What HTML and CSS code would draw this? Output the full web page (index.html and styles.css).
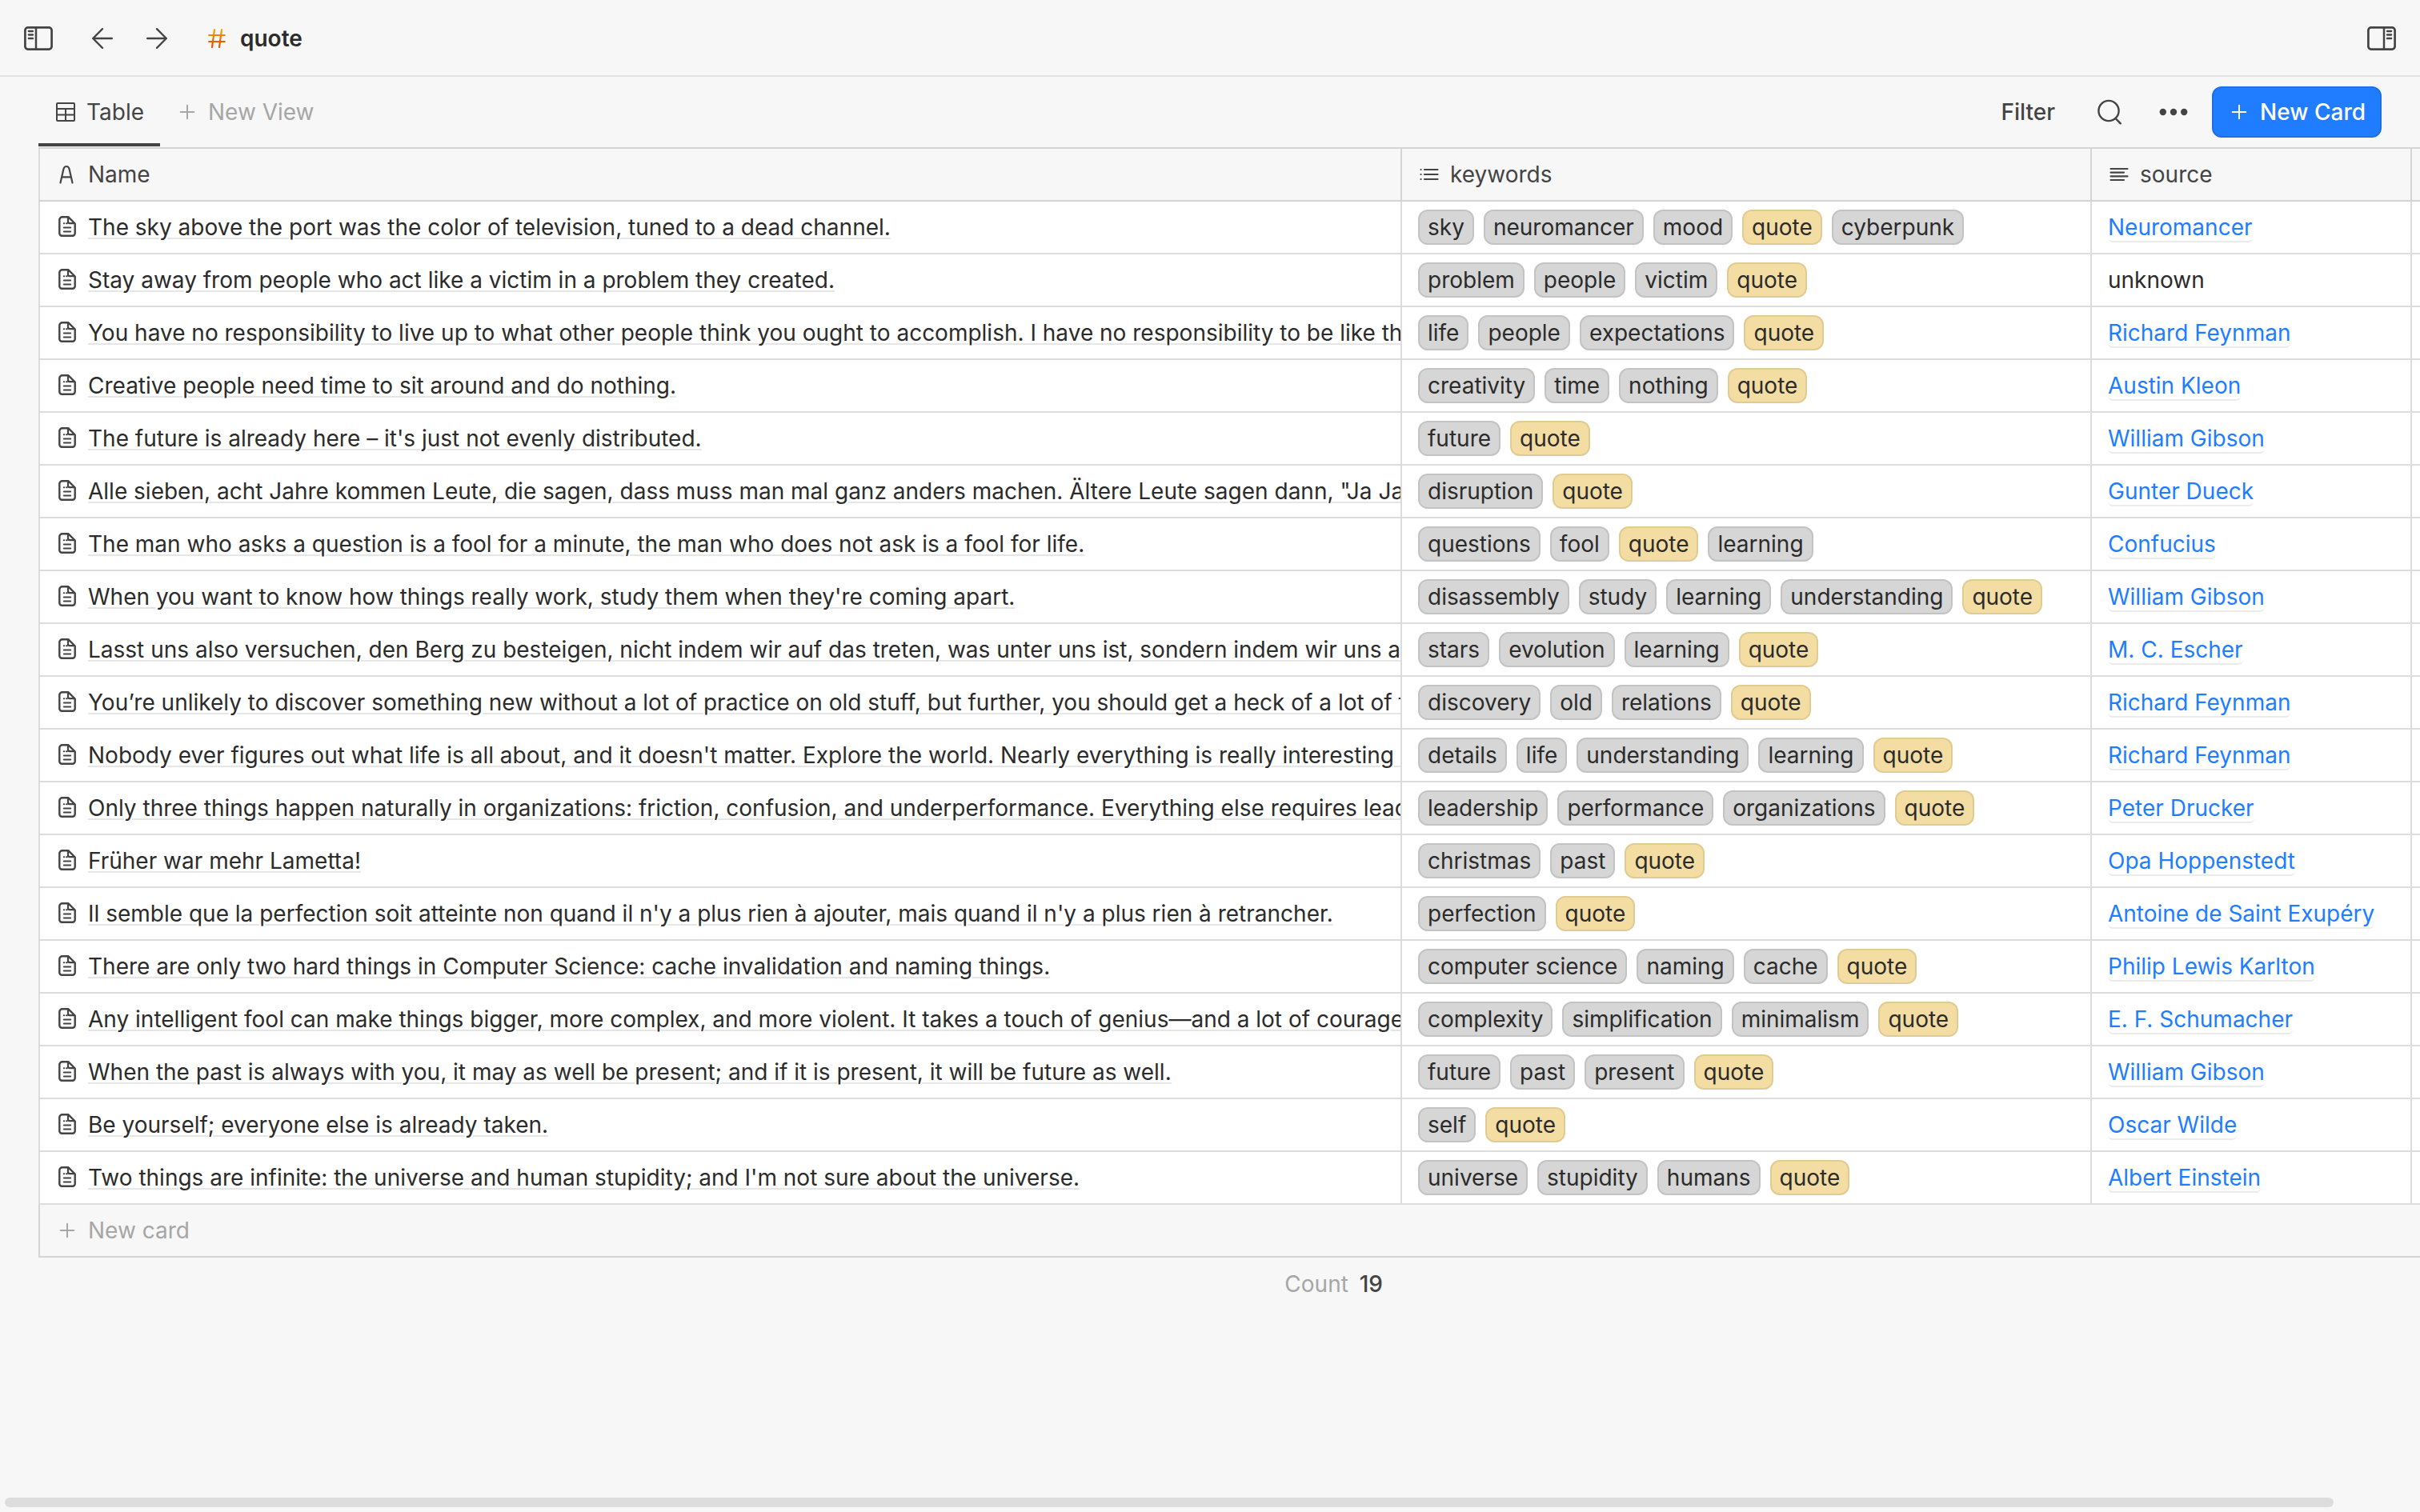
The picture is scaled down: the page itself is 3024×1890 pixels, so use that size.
FILE: index.html
```
<!DOCTYPE html>
<html lang="en">
<head>
  <meta charset="UTF-8">
  <title>quote</title>
  <link rel="stylesheet" href="styles.css">
</head>
<body>
  <svg class="sprite" aria-hidden="true">
    <symbol id="i-doc" viewBox="0 0 26 28">
      <path d="M4.300 4.800a3.500 3.500 0 0 1 3.500-3.500H15.500l8.200 8.200V21.700a3 3 0 0 1-3 3H7.300a3 3 0 0 1-3-3z" fill="none" stroke="currentColor" stroke-width="2.400" stroke-linejoin="round"/>
      <path d="M15 1.500v5.500a2.200 2.200 0 0 0 2.200 2.200h6" fill="none" stroke="currentColor" stroke-width="2.200"/>
      <path d="M9.800 9.200h.400M13 9.200h.800M9.800 14.500h8.400M9.800 19.500h8.400" fill="none" stroke="currentColor" stroke-width="2" stroke-linecap="round"/>
    </symbol>
    <symbol id="i-plus" viewBox="0 0 20 20">
      <path d="M10 1.700v16.600M1.700 10h16.600" fill="none" stroke="currentColor" stroke-width="2" stroke-linecap="round"/>
    </symbol>
  </svg>

  <header class="topbar">
    <button class="icon-btn" aria-label="Toggle left sidebar">
      <svg width="36" height="30" viewBox="0 0 36 30" fill="none" stroke="currentColor"><rect x="1.400" y="1.400" width="33.200" height="27.200" rx="3.500" stroke-width="2.700"/><path d="M15 1v28" stroke-width="2.500"/><path d="M5.800 6h5.200M5.800 10.500h5.200M5.800 15h5.200" stroke-width="2.300" stroke-linecap="round"/></svg>
    </button>
    <button class="icon-btn back" aria-label="Back">
      <svg width="28" height="28" viewBox="0 0 28 28" fill="none" stroke="currentColor" stroke-width="2.400" stroke-linecap="round" stroke-linejoin="round"><path d="M14 2.200L2.200 14 14 25.800M2.200 14h23.600"/></svg>
    </button>
    <button class="icon-btn forward" aria-label="Forward">
      <svg width="28" height="28" viewBox="0 0 28 28" fill="none" stroke="currentColor" stroke-width="2.400" stroke-linecap="round" stroke-linejoin="round"><path d="M14 2.200L25.800 14 14 25.800M25.800 14H2.200"/></svg>
    </button>
    <svg class="hash" width="22" height="24" viewBox="0 0 22 24" fill="none" stroke="url(#hashFill)" stroke-width="2.200" stroke-linecap="round">
      <defs><linearGradient id="hashFill" gradientUnits="userSpaceOnUse" x1="0" y1="0" x2="0" y2="24"><stop offset="0" stop-color="#f9a80d"/><stop offset=".7" stop-color="#e85a00"/><stop offset="1" stop-color="#ea4e00"/></linearGradient></defs>
      <path d="M8 1.200L5 22.800M17 1.200L14 22.800M1.200 8h19.600M1.200 16h19.600"/>
    </svg>
    <h1 class="title">quote</h1>
    <button class="icon-btn right" aria-label="Toggle right sidebar">
      <svg width="36" height="30" viewBox="0 0 36 30" fill="none" stroke="currentColor"><rect x="1.400" y="1.400" width="33.200" height="27.200" rx="3.500" stroke-width="2.700"/><path d="M21 1v28" stroke-width="2.500"/><path d="M25 6h5.200M25 10.500h5.200M25 15h5.200" stroke-width="2.300" stroke-linecap="round"/></svg>
    </button>
  </header>

  <nav class="toolbar">
    <button class="tab active">
      <svg width="24" height="24" viewBox="0 0 24 24" fill="none" stroke="currentColor" stroke-width="2"><rect x="1" y="1" width="22" height="22" rx="1"/><path d="M1 8h22M1 15.500h22M12 8v15"/></svg>
      Table
    </button>
    <button class="new-view"><svg class="plus"><use href="#i-plus"/></svg>New View</button>
    <div class="actions">
      <button class="filter">Filter</button>
      <button class="icon-btn" aria-label="Search">
        <svg width="32" height="32" viewBox="0 0 32 32" fill="none" stroke="currentColor" stroke-width="2.400" stroke-linecap="round"><circle cx="15" cy="14.500" r="12.600"/><path d="M23.500 24l6.300 6.300"/></svg>
      </button>
      <button class="icon-btn" aria-label="More">
        <svg width="36" height="10" viewBox="0 0 36 10" fill="currentColor"><circle cx="4.800" cy="5" r="4.200"/><circle cx="18" cy="5" r="4.200"/><circle cx="31.200" cy="5" r="4.200"/></svg>
      </button>
      <button class="new-card"><svg class="plus"><use href="#i-plus"/></svg>New Card</button>
    </div>
  </nav>

  <main class="content">
    <table class="grid">
      <colgroup><col><col class="col-keywords"><col class="col-source"><col class="col-rest"></colgroup>
      <thead>
        <tr>
          <th><div class="head"><svg width="26" height="26" viewBox="0 0 26 26" fill="none" stroke="currentColor" stroke-width="2.200" stroke-linecap="round"><path d="M5.500 23.500L9.500 6Q10.300 3 13 3T16.500 6L20.500 23.500M7.500 16.300h11"/></svg>Name</div></th>
          <th><div class="head"><svg width="26" height="26" viewBox="0 0 26 26" fill="none" stroke="currentColor" stroke-width="2.200" stroke-linecap="round"><path d="M8 7h16.500M8 13h16.500M8 19h16.500M3.500 7h.100M3.500 13h.100M3.500 19h.100"/></svg>keywords</div></th>
          <th><div class="head"><svg width="26" height="26" viewBox="0 0 26 26" fill="none" stroke="currentColor" stroke-width="2.200" stroke-linecap="round"><path d="M3.500 6h21M3.500 10.600h16.500M3.500 15.300h21M3.500 20h16.500"/></svg>source</div></th>
          <th></th>
        </tr>
      </thead>
      <tbody>
        <tr>
          <td><div class="name"><svg class="doc"><use href="#i-doc"/></svg><a href="#">The sky above the port was the color of television, tuned to a dead channel.</a></div></td>
          <td><div class="tags"><span>sky</span><span>neuromancer</span><span>mood</span><span class="quote">quote</span><span>cyberpunk</span></div></td>
          <td><a class="source" href="#">Neuromancer</a></td><td></td>
        </tr>
        <tr>
          <td><div class="name"><svg class="doc"><use href="#i-doc"/></svg><a href="#">Stay away from people who act like a victim in a problem they created.</a></div></td>
          <td><div class="tags"><span>problem</span><span>people</span><span>victim</span><span class="quote">quote</span></div></td>
          <td>unknown</td><td></td>
        </tr>
        <tr>
          <td><div class="name"><svg class="doc"><use href="#i-doc"/></svg><a href="#">You have no responsibility to live up to what other people think you ought to accomplish. I have no responsibility to be like they</a></div></td>
          <td><div class="tags"><span>life</span><span>people</span><span>expectations</span><span class="quote">quote</span></div></td>
          <td><a class="source" href="#">Richard Feynman</a></td><td></td>
        </tr>
        <tr>
          <td><div class="name"><svg class="doc"><use href="#i-doc"/></svg><a href="#">Creative people need time to sit around and do nothing.</a></div></td>
          <td><div class="tags"><span>creativity</span><span>time</span><span>nothing</span><span class="quote">quote</span></div></td>
          <td><a class="source" href="#">Austin Kleon</a></td><td></td>
        </tr>
        <tr>
          <td><div class="name"><svg class="doc"><use href="#i-doc"/></svg><a href="#">The future is already here – it's just not evenly distributed.</a></div></td>
          <td><div class="tags"><span>future</span><span class="quote">quote</span></div></td>
          <td><a class="source" href="#">William Gibson</a></td><td></td>
        </tr>
        <tr>
          <td><div class="name"><svg class="doc"><use href="#i-doc"/></svg><a href="#">Alle sieben, acht Jahre kommen Leute, die sagen, dass muss man mal ganz anders machen. Ältere Leute sagen dann, "Ja Ja"</a></div></td>
          <td><div class="tags"><span>disruption</span><span class="quote">quote</span></div></td>
          <td><a class="source" href="#">Gunter Dueck</a></td><td></td>
        </tr>
        <tr>
          <td><div class="name"><svg class="doc"><use href="#i-doc"/></svg><a href="#">The man who asks a question is a fool for a minute, the man who does not ask is a fool for life.</a></div></td>
          <td><div class="tags"><span>questions</span><span>fool</span><span class="quote">quote</span><span>learning</span></div></td>
          <td><a class="source" href="#">Confucius</a></td><td></td>
        </tr>
        <tr>
          <td><div class="name"><svg class="doc"><use href="#i-doc"/></svg><a href="#">When you want to know how things really work, study them when they're coming apart.</a></div></td>
          <td><div class="tags"><span>disassembly</span><span>study</span><span>learning</span><span>understanding</span><span class="quote">quote</span></div></td>
          <td><a class="source" href="#">William Gibson</a></td><td></td>
        </tr>
        <tr>
          <td><div class="name"><svg class="doc"><use href="#i-doc"/></svg><a href="#">Lasst uns also versuchen, den Berg zu besteigen, nicht indem wir auf das treten, was unter uns ist, sondern indem wir uns an</a></div></td>
          <td><div class="tags"><span>stars</span><span>evolution</span><span>learning</span><span class="quote">quote</span></div></td>
          <td><a class="source" href="#">M. C. Escher</a></td><td></td>
        </tr>
        <tr>
          <td><div class="name"><svg class="doc"><use href="#i-doc"/></svg><a href="#">You’re unlikely to discover something new without a lot of practice on old stuff, but further, you should get a heck of a lot of fun</a></div></td>
          <td><div class="tags"><span>discovery</span><span>old</span><span>relations</span><span class="quote">quote</span></div></td>
          <td><a class="source" href="#">Richard Feynman</a></td><td></td>
        </tr>
        <tr>
          <td><div class="name"><svg class="doc"><use href="#i-doc"/></svg><a href="#">Nobody ever figures out what life is all about, and it doesn't matter. Explore the world. Nearly everything is really interesting if</a></div></td>
          <td><div class="tags"><span>details</span><span>life</span><span>understanding</span><span>learning</span><span class="quote">quote</span></div></td>
          <td><a class="source" href="#">Richard Feynman</a></td><td></td>
        </tr>
        <tr>
          <td><div class="name"><svg class="doc"><use href="#i-doc"/></svg><a href="#">Only three things happen naturally in organizations: friction, confusion, and underperformance. Everything else requires leadership.</a></div></td>
          <td><div class="tags"><span>leadership</span><span>performance</span><span>organizations</span><span class="quote">quote</span></div></td>
          <td><a class="source" href="#">Peter Drucker</a></td><td></td>
        </tr>
        <tr>
          <td><div class="name"><svg class="doc"><use href="#i-doc"/></svg><a href="#">Früher war mehr Lametta!</a></div></td>
          <td><div class="tags"><span>christmas</span><span>past</span><span class="quote">quote</span></div></td>
          <td><a class="source" href="#">Opa Hoppenstedt</a></td><td></td>
        </tr>
        <tr>
          <td><div class="name"><svg class="doc"><use href="#i-doc"/></svg><a href="#">Il semble que la perfection soit atteinte non quand il n'y a plus rien à ajouter, mais quand il n'y a plus rien à retrancher.</a></div></td>
          <td><div class="tags"><span>perfection</span><span class="quote">quote</span></div></td>
          <td><a class="source" href="#">Antoine de Saint Exupéry</a></td><td></td>
        </tr>
        <tr>
          <td><div class="name"><svg class="doc"><use href="#i-doc"/></svg><a href="#">There are only two hard things in Computer Science: cache invalidation and naming things.</a></div></td>
          <td><div class="tags"><span>computer science</span><span>naming</span><span>cache</span><span class="quote">quote</span></div></td>
          <td><a class="source" href="#">Philip Lewis Karlton</a></td><td></td>
        </tr>
        <tr>
          <td><div class="name"><svg class="doc"><use href="#i-doc"/></svg><a href="#">Any intelligent fool can make things bigger, more complex, and more violent. It takes a touch of genius—and a lot of courage to</a></div></td>
          <td><div class="tags"><span>complexity</span><span>simplification</span><span>minimalism</span><span class="quote">quote</span></div></td>
          <td><a class="source" href="#">E. F. Schumacher</a></td><td></td>
        </tr>
        <tr>
          <td><div class="name"><svg class="doc"><use href="#i-doc"/></svg><a href="#">When the past is always with you, it may as well be present; and if it is present, it will be future as well.</a></div></td>
          <td><div class="tags"><span>future</span><span>past</span><span>present</span><span class="quote">quote</span></div></td>
          <td><a class="source" href="#">William Gibson</a></td><td></td>
        </tr>
        <tr>
          <td><div class="name"><svg class="doc"><use href="#i-doc"/></svg><a href="#">Be yourself; everyone else is already taken.</a></div></td>
          <td><div class="tags"><span>self</span><span class="quote">quote</span></div></td>
          <td><a class="source" href="#">Oscar Wilde</a></td><td></td>
        </tr>
        <tr>
          <td><div class="name"><svg class="doc"><use href="#i-doc"/></svg><a href="#">Two things are infinite: the universe and human stupidity; and I'm not sure about the universe.</a></div></td>
          <td><div class="tags"><span>universe</span><span>stupidity</span><span>humans</span><span class="quote">quote</span></div></td>
          <td><a class="source" href="#">Albert Einstein</a></td><td></td>
        </tr>
      </tbody>
      <tfoot>
        <tr class="add-row"><td colspan="4"><button class="add"><svg class="plus"><use href="#i-plus"/></svg>New card</button></td></tr>
        <tr class="count-row"><td><div class="count">Count <b>19</b></div></td><td colspan="3"></td></tr>
      </tfoot>
    </table>
  </main>
  <div class="scrollbar"><div class="thumb"></div></div>
</body>
</html>
```
FILE: styles.css
```
* { box-sizing: border-box; }
body {
  margin: 0;
  min-height: 100vh;
  display: flex;
  flex-direction: column;
  overflow: hidden;
  background: #f7f7f7;
  color: #444;
  font-family: Inter, "Liberation Sans", sans-serif;
  font-size: 28px;
  line-height: 40px;
}
svg { flex: none; display: block; }
a { text-decoration: none; }
button { padding: 0; border: 0; background: none; color: inherit; font: inherit; white-space: nowrap; display: flex; align-items: center; }
.sprite { position: absolute; width: 0; height: 0; }
.plus { width: 20px; height: 20px; }

/* top bar */
.topbar { display: flex; align-items: center; height: 96px; padding: 2px 30px 0; border-bottom: 2px solid #e2e2e2; }
.back { margin-left: 48px; }
.forward { margin-left: 40px; }
.hash { margin-left: 50px; }
.title { margin: 0 0 0 18px; font-size: 28px; font-weight: 600; color: #2b2b2b; }
.right { margin-left: auto; }

/* tabs and actions */
.toolbar { display: flex; align-items: center; height: 88px; padding: 0 48px; }
.tab { height: 86px; padding: 0 20px 0 22px; gap: 14px; }
.tab.active { border-bottom: 4px solid #444; border-top: 4px solid transparent; }
.new-view { margin-left: 24px; gap: 16px; color: #a6a6a6; }
.actions { margin-left: auto; display: flex; align-items: center; }
.filter { margin-right: 52px; font-weight: 500; }
.actions .icon-btn { margin-right: 46px; }
.actions .icon-btn + .icon-btn { margin-right: 30px; }
.new-card { height: 64px; padding: 0 18px 0 22px; gap: 16px; border: 2px solid #1f6fe3; border-radius: 12px; background: #217dff; color: #fff; font-weight: 500; }

/* grid */
.content { flex: 1; padding-left: 48px; overflow: hidden; }
.grid { width: 100%; table-layout: fixed; border-collapse: separate; border-spacing: 0; border-top: 2px solid #d4d4d4; }
.col-keywords { width: 862px; }
.col-source { width: 400px; }
.col-rest { width: 10px; }
.grid th, .grid td { height: 66px; padding: 0 0 0 20px; border-right: 2px solid #dcdcdc; border-bottom: 2px solid #dcdcdc; text-align: left; white-space: nowrap; overflow: hidden; }
.grid th { border-color: #d4d4d4; font-weight: 400; }
.grid th:first-child, .grid td:first-child { border-left: 2px solid #dcdcdc; }
.grid th:last-child, .grid td:last-child { border-right: 0; padding: 0; }
.grid tbody td { background: #fff; color: #2b2b2b; }
.head, .name { display: flex; align-items: center; gap: 14px; }
.name { overflow: hidden; }
.doc { width: 26px; height: 28px; color: #444; }
.name a { color: inherit; text-decoration: underline; text-decoration-color: #e6e6e6; text-decoration-thickness: 2px; text-underline-offset: 3px; }
.tags { display: flex; gap: 12px; }
.tags span { padding: 0 10px; border: 2px solid #c3c3c3; border-radius: 12px; background: #d6d6d6; }
.tags .quote { border-color: #e0cb92; background: #f4dda3; }
.source { display: inline-block; line-height: 34px; color: #217dff; border-bottom: 2px solid #ebebeb; border-radius: 6px; }

.grid .add-row td { padding: 0; border-color: #d4d4d4; }
.add { width: 100%; height: 64px; padding-left: 24px; gap: 16px; color: #a6a6a6; }
.grid .count-row td { border: 0; }
.count { padding-right: 24px; text-align: right; color: #a6a6a6; }
.count b { margin-left: 6px; font-weight: 500; color: #444; }

.scrollbar { padding: 0 108px 6px 6px; }
.thumb { height: 12px; border-radius: 6px; background: #ddd; }
```
